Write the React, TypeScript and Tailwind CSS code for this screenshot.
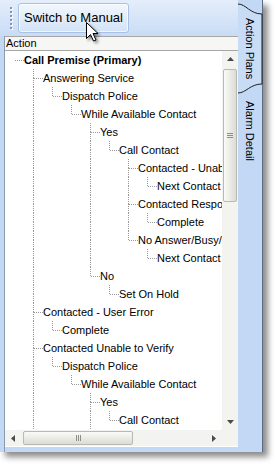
import React from 'react';

type Row = { level: number; text: string; bold?: boolean };

const rows: Row[] = [
  { level: 0, text: 'Call Premise (Primary)', bold: true },
  { level: 1, text: 'Answering Service' },
  { level: 2, text: 'Dispatch Police' },
  { level: 3, text: 'While Available Contact' },
  { level: 4, text: 'Yes' },
  { level: 5, text: 'Call Contact' },
  { level: 6, text: 'Contacted - Unable to Verify' },
  { level: 7, text: 'Next Contact' },
  { level: 6, text: 'Contacted Responsible' },
  { level: 7, text: 'Complete' },
  { level: 6, text: 'No Answer/Busy/Machine' },
  { level: 7, text: 'Next Contact' },
  { level: 4, text: 'No' },
  { level: 5, text: 'Set On Hold' },
  { level: 1, text: 'Contacted - User Error' },
  { level: 2, text: 'Complete' },
  { level: 1, text: 'Contacted Unable to Verify' },
  { level: 2, text: 'Dispatch Police' },
  { level: 3, text: 'While Available Contact' },
  { level: 4, text: 'Yes' },
  { level: 5, text: 'Call Contact' },
];

// below the visible part, only used to know where lines keep going
const below: Row[] = [
  { level: 4, text: 'No' },
  { level: 1, text: 'Contacted - Verified' },
];

const all = [...rows, ...below];

const hasNext = (i: number, k: number) => {
  for (let j = i + 1; j < all.length; j++) {
    if (all[j].level < k) return false;
    if (all[j].level === k) return true;
  }
  return false;
};

const DOT = '#9a9a9a';

const Col = ({ up, down, across }: { up: boolean; down: boolean; across: boolean }) => (
  <svg width="19" height="18" className="shrink-0" shapeRendering="crispEdges">
    {up && <line x1="9.5" y1="0" x2="9.5" y2="9" stroke={DOT} strokeDasharray="1 1" />}
    {down && <line x1="9.5" y1="9" x2="9.5" y2="18" stroke={DOT} strokeDasharray="1 1" />}
    {across && <line x1="10" y1="9.5" x2="19" y2="9.5" stroke={DOT} strokeDasharray="1 1" />}
  </svg>
);

const TreeRow = ({ row, i }: { row: Row; i: number }) => {
  const cols = [];
  for (let k = 0; k < row.level; k++) {
    const go = k >= 1 && hasNext(i, k);
    cols.push(<Col key={k} up={go} down={go} across={false} />);
  }
  cols.push(
    <Col key="own" up={row.level >= 1} down={row.level >= 1 && hasNext(i, row.level)} across />
  );
  return (
    <div className="flex h-[18px] items-center whitespace-nowrap">
      {cols}
      <span className={`text-[11px] leading-[18px] text-black ${row.bold ? 'font-bold' : ''}`}>
        {row.text}
      </span>
    </div>
  );
};

const Arrow = ({ dir }: { dir: 'up' | 'down' | 'left' | 'right' }) => {
  const pts = {
    up: '0,4 7,4 3.5,0',
    down: '0,0 7,0 3.5,4',
    left: '4,0 4,7 0,3.5',
    right: '0,0 0,7 4,3.5',
  }[dir];
  const vert = dir === 'up' || dir === 'down';
  return (
    <svg width={vert ? 7 : 4} height={vert ? 4 : 7}>
      <polygon points={pts} fill="#4a4a4a" />
    </svg>
  );
};

const VScroll = () => (
  <div className="flex w-[16px] flex-col bg-[#f3f3ef]">
    <div className="flex h-[16px] items-center justify-center">
      <Arrow dir="up" />
    </div>
    <div className="mx-[1px] mt-[2px] flex h-[133px] items-center justify-center rounded-[2px] border border-[#b9b9b2] bg-gradient-to-r from-[#fafaf8] to-[#dcdcd5]">
      <div className="flex flex-col gap-[1px]">
        <div className="h-[1px] w-[6px] bg-[#8e8e88]" />
        <div className="h-[1px] w-[6px] bg-[#8e8e88]" />
        <div className="h-[1px] w-[6px] bg-[#8e8e88]" />
      </div>
    </div>
    <div className="flex-1" />
    <div className="flex h-[16px] items-center justify-center">
      <Arrow dir="down" />
    </div>
  </div>
);

const HScroll = () => (
  <div className="flex h-[16px] flex-1 items-stretch bg-[#f3f3ef]">
    <div className="flex w-[16px] items-center justify-center">
      <Arrow dir="left" />
    </div>
    <div className="my-[1px] ml-[2px] flex w-[110px] items-center justify-center gap-[1px] rounded-[2px] border border-[#b9b9b2] bg-gradient-to-b from-[#fafaf8] to-[#dcdcd5]">
      <div className="h-[6px] w-[1px] bg-[#8e8e88]" />
      <div className="h-[6px] w-[1px] bg-[#8e8e88]" />
      <div className="h-[6px] w-[1px] bg-[#8e8e88]" />
    </div>
    <div className="flex-1" />
    <div className="flex w-[16px] items-center justify-center">
      <Arrow dir="right" />
    </div>
  </div>
);

const Gripper = () => (
  <div className="flex w-[3px] flex-col gap-[2px]">
    {[0, 1, 2, 3, 4, 5].map((d) => (
      <div key={d} className="h-[2px] w-[2px] bg-[#7d97c0] shadow-[1px_1px_0_#ffffff]" />
    ))}
  </div>
);

export default function App() {
  return (
    <div className="relative h-[465px] w-[279px] overflow-hidden bg-white font-['Liberation_Sans',Arial,sans-serif]">
      <div className="flex h-[452px] w-[263px] bg-[#c3d8f4] shadow-[5px_5px_6px_rgba(0,0,0,0.45)]">
        <div className="flex w-[238px] flex-col">
          <div className="flex h-[36px] items-center gap-[5px] bg-gradient-to-b from-[#e4eefb] to-[#c9dcf5] pl-[10px]">
            <Gripper />
            <div className="flex h-[30px] w-[111px] items-center justify-center rounded-[3px] border border-[#a9c1e3] bg-gradient-to-b from-[#f2f7fd] to-[#d2e2f6] text-[13px] text-black shadow-[inset_0_0_0_1px_rgba(255,255,255,0.7)]">
              Switch to Manual
            </div>
          </div>
          <div className="ml-[4px] flex flex-1 flex-col border-l border-[#8c9aab] bg-white">
            <div className="flex h-[15px] items-center border-y border-[#a6a6a6] bg-[#f6f6f4] pl-[1px] text-[11px] text-black">
              Action
            </div>
            <div className="flex flex-1">
              <div className="w-[217px] overflow-hidden">
                {rows.map((r, i) => (
                  <TreeRow key={i} row={r} i={i} />
                ))}
              </div>
              <VScroll />
            </div>
            <div className="flex">
              <HScroll />
              <div className="h-[16px] w-[16px] bg-[#f3f3ef]" />
            </div>
            <div className="h-[1px] bg-white" />
            <div className="h-[5px] bg-[#c3d8f4]" />
          </div>
        </div>
        <div className="relative flex w-[25px] flex-col border-r border-[#5c6b80]">
          <svg width="25" height="95" className="absolute left-0 top-0">
            <path d="M0 4 C 8 4, 12 14, 24 14 L 24 84 C 12 84, 8 93, 0 93" fill="#c8dcf6" stroke="#1e1e1e" strokeWidth="1" />
          </svg>
          <div className="relative flex h-[95px] justify-center pt-[18px]">
            <span className="text-[11px] text-black [writing-mode:vertical-rl]">Action Plans</span>
          </div>
          <div className="flex justify-center pt-[6px]">
            <span className="text-[11px] text-black [writing-mode:vertical-rl]">Alarm Detail</span>
          </div>
        </div>
      </div>
      <svg width="16" height="24" className="absolute left-[86px] top-[22px]" style={{ filter: 'drop-shadow(2px 2px 1.5px rgba(0,0,0,0.45))' }}>
        <polygon points="0.5,0.5 0.5,16.5 4.5,12.5 7.5,19 10,18 7,11.5 12,11.5" fill="#ffffff" stroke="#000000" strokeWidth="1" />
      </svg>
    </div>
  );
}
